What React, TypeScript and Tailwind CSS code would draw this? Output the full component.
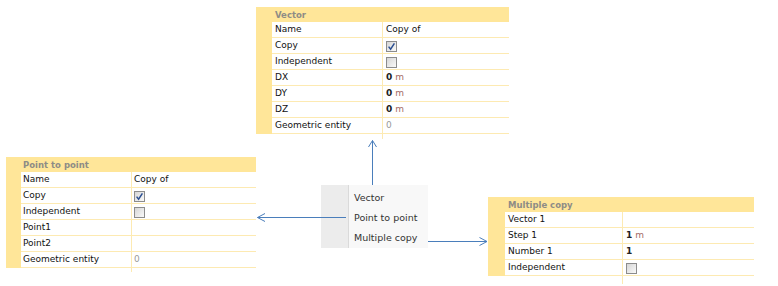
import React from "react";

type Row = { label: string; value?: React.ReactNode };

const FONT = { fontFamily: '"DejaVu Sans", "Liberation Sans", sans-serif' };

function Check({ on }: { on?: boolean }) {
  // small classic checkbox with soft gradient
  return (
    <svg width="11" height="11" viewBox="0 0 11 11" className="block">
      <defs>
        <linearGradient id="cbg" x1="0" y1="0" x2="1" y2="1">
          <stop offset="0" stopColor="#d4d4d4" />
          <stop offset="1" stopColor="#fbfbfb" />
        </linearGradient>
      </defs>
      <rect x="0.5" y="0.5" width="10" height="10" fill="url(#cbg)" stroke="#8c8c8c" />
      {on && (
        <path d="M2.6 5.6 L4.6 8.2 L8.4 2.4" fill="none" stroke="#2b4f92" strokeWidth="1.5" />
      )}
    </svg>
  );
}

function Num({ n, unit }: { n: string; unit?: boolean }) {
  return (
    <span className="flex items-center gap-[3px]">
      <span className="font-bold text-[#222]">{n}</span>
      {unit && <span className="text-[#a46b66]">m</span>}
    </span>
  );
}

function Panel({
  title,
  rows,
  pos,
  stripe,
  labelW,
  pad,
  tail,
}: {
  title: string;
  rows: Row[];
  pos: string;
  stripe: string;
  labelW: string;
  pad: string;
  tail: string;
}) {
  return (
    <div className={`absolute flex flex-col ${pos}`}>
      <div className={`bg-[#ffe699] ${stripe}`}>
        <div className={`h-[15px] flex items-center pt-px ${pad} text-[8.5px] font-bold text-[#8e8c86]`}>
          {title}
        </div>
        {rows.map((r) => (
          <div key={r.label} className="flex h-4 bg-white border-b border-[#fdeab2] text-[9px] text-[#111]">
            <div className={`${labelW} ${pad} pt-px border-r border-[#fdeab2] flex items-center`}>{r.label}</div>
            <div className={`flex-1 ${pad} pt-px flex items-center`}>{r.value}</div>
          </div>
        ))}
      </div>
      <div className={`flex ${tail} ${stripe}`}>
        <div className={`${labelW} border-r border-[#fdeab2]`} />
      </div>
    </div>
  );
}

export default function App() {
  return (
    <div className="relative w-[778px] h-[286px] bg-white overflow-hidden" style={FONT}>
      {/* vector */}
      <Panel
        title="Vector"
        pos="left-[256px] top-[7px] w-[253px]"
        stripe="pl-[16px]"
        labelW="w-[111px]"
        pad="pl-[3px]"
        tail="h-[5px]"
        rows={[
          { label: "Name", value: "Copy of" },
          { label: "Copy", value: <Check on /> },
          { label: "Independent", value: <Check /> },
          { label: "DX", value: <Num n="0" unit /> },
          { label: "DY", value: <Num n="0" unit /> },
          { label: "DZ", value: <Num n="0" unit /> },
          { label: "Geometric entity", value: <span className="text-[#9a9a9a]">0</span> },
        ]}
      />

      {/* point to point */}
      <Panel
        title="Point to point"
        pos="left-[6px] top-[157px] w-[250px]"
        stripe="pl-[15px]"
        labelW="w-[111px]"
        pad="pl-[2px]"
        tail="h-[4px]"
        rows={[
          { label: "Name", value: "Copy of" },
          { label: "Copy", value: <Check on /> },
          { label: "Independent", value: <Check /> },
          { label: "Point1" },
          { label: "Point2" },
          { label: "Geometric entity", value: <span className="text-[#9a9a9a]">0</span> },
        ]}
      />

      {/* multiple copy */}
      <Panel
        title="Multiple copy"
        pos="left-[488px] top-[197px] w-[266px]"
        stripe="pl-[17px]"
        labelW="w-[118px]"
        pad="pl-[3px]"
        tail="h-[8px]"
        rows={[
          { label: "Vector 1" },
          { label: "Step 1", value: <Num n="1" unit /> },
          { label: "Number 1", value: <Num n="1" /> },
          { label: "Independent", value: <Check /> },
        ]}
      />

      {/* context menu */}
      <div className="absolute left-[321px] top-[185px] w-[107px] h-[63px] flex">
        <div className="w-[28px] bg-[#ececec] border-r border-[#dadada]" />
        <div className="flex-1 bg-[#f8f8f8] pt-[3px] flex flex-col text-[9.5px] text-[#333]">
          <div className="h-5 flex items-center pl-[5px]">Vector</div>
          <div className="h-5 flex items-center pl-[5px]">Point to point</div>
          <div className="h-5 flex items-center pl-[5px]">Multiple copy</div>
        </div>
      </div>

      {/* connectors */}
      <svg className="absolute inset-0 pointer-events-none" width="778" height="286">
        <g stroke="#4a7ebb" strokeWidth="1" fill="none">
          <path d="M372.5 185 L372.5 140.5 M368.5 147 L372.5 140.5 L376.5 147" />
          <path d="M346 217.5 L257.5 217.5 M265 213.5 L257.5 217.5 L265 221.5" />
          <path d="M428 241.5 L487 241.5 M479.5 237.5 L487 241.5 L479.5 245.5" />
        </g>
      </svg>
    </div>
  );
}
